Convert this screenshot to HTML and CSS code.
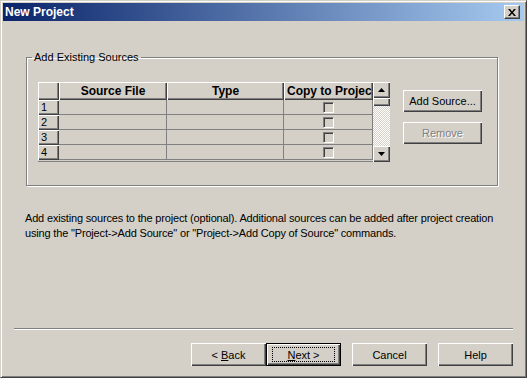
FILE: index.html
```html
<!DOCTYPE html>
<html>
<head>
<meta charset="utf-8">
<title>New Project</title>
<link rel="stylesheet" href="styles.css">
</head>
<body>
<div class="window">
  <div class="titlebar">
    <span class="title">New Project</span>
    <span class="close"><svg width="8" height="7" viewBox="0 0 8 7"><path d="M0 0h2l2 2.5L6 0h2L5 3.5 8 7H6L4 4.5 2 7H0l3-3.5z" fill="#000"/></svg></span>
  </div>
  <div class="client">
    <fieldset class="group">
      <legend>Add Existing Sources</legend>
      <div class="group-row">
        <div class="grid">
          <div class="table">
            <div class="hcell"></div>
            <div class="hcell">Source File</div>
            <div class="hcell">Type</div>
            <div class="hcell clip">Copy to Projec</div>

            <div class="rcell">1</div><div class="dcell"></div><div class="dcell"></div><div class="dcell chk"><span class="box"></span></div>
            <div class="rcell">2</div><div class="dcell"></div><div class="dcell"></div><div class="dcell chk"><span class="box"></span></div>
            <div class="rcell">3</div><div class="dcell"></div><div class="dcell"></div><div class="dcell chk"><span class="box"></span></div>
            <div class="rcell">4</div><div class="dcell"></div><div class="dcell"></div><div class="dcell chk"><span class="box"></span></div>
          </div>
          <div class="vscroll">
            <span class="sbtn"><svg width="7" height="4" viewBox="0 0 7 4"><path d="M3.5 0L7 4H0z" fill="#000"/></svg></span>
            <span class="thumb"></span>
            <span class="track"></span>
            <span class="sbtn"><svg width="7" height="4" viewBox="0 0 7 4"><path d="M0 0h7L3.5 4z" fill="#000"/></svg></span>
          </div>
        </div>
        <div class="side">
          <span class="btn">Add Source...</span>
          <span class="btn disabled">Remove</span>
        </div>
      </div>
    </fieldset>
    <p class="desc">Add existing sources to the project (optional). Additional sources can be added after project creation<br>using the "Project-&gt;Add Source" or "Project-&gt;Add Copy of Source" commands.</p>
    <div class="sep"></div>
    <div class="nav">
      <div class="pair">
        <span class="btn wide"><span class="label">&lt; <u>B</u>ack</span></span>
        <span class="btn wide default"><span class="focus"><span class="label"><u>N</u>ext &gt;</span></span></span>
      </div>
      <span class="btn wide">Cancel</span>
      <span class="btn wide">Help</span>
    </div>
  </div>
</div>
</body>
</html>
```

FILE: styles.css
```css
html, body {
  margin: 0;
  background: #d4d0c8;
}
body {
  font: 11px "Liberation Sans", Arial, sans-serif;
  color: #000;
}
.window {
  width: 527px;
  height: 378px;
  box-sizing: border-box;
  background: #d4d0c8;
  border: 1px solid;
  border-color: #d4d0c8 #404040 #404040 #d4d0c8;
  box-shadow: inset 1px 1px #fff, inset -1px -1px #808080;
  padding: 2px;
  display: flex;
  flex-direction: column;
}
.titlebar {
  flex: none;
  height: 18px;
  display: flex;
  align-items: center;
  justify-content: space-between;
  padding: 0 4px 0 2px;
  background: linear-gradient(90deg, #0a246a, #a6caf0);
}
.title {
  color: #fff;
  font-weight: bold;
  font-size: 12px;
  line-height: 18px;
}
.close {
  width: 16px;
  height: 14px;
  box-sizing: border-box;
  display: flex;
  align-items: center;
  justify-content: center;
  background: #d4d0c8;
  border: 1px solid;
  border-color: #fff #404040 #404040 #fff;
  box-shadow: inset -1px -1px #808080;
}
.client {
  flex: 1;
  display: flex;
  flex-direction: column;
}
.group {
  margin: 30px 0 0 23px;
  padding: 0;
  width: 472px;
  height: 135px;
  box-sizing: border-box;
  border: 1px solid #808080;
  box-shadow: 1px 1px #fff, inset 1px 1px #fff;
  min-inline-size: 0;
}
.group legend {
  margin-left: 5px;
  padding: 0 2px;
  line-height: 13px;
}
.group-row {
  display: flex;
  margin: 18px 0 0 11px;
}
.grid {
  display: flex;
  height: 80px;
}
.table {
  display: grid;
  grid-template-columns: 21px 108px 117px 89px;
  grid-template-rows: 18px repeat(4, 15px);
  height: 80px;
  overflow: hidden;
  border-bottom: 1px solid #808080;
  box-sizing: border-box;
}
.hcell {
  box-shadow: inset 1px 1px #fff, inset -1px -1px #404040, inset -2px -2px #808080;
  font-weight: bold;
  font-size: 12px;
  text-align: center;
  line-height: 18px;
  white-space: nowrap;
  overflow: hidden;
}
.hcell.clip {
  text-align: left;
  padding-left: 3px;
}
.rcell {
  box-shadow: inset 1px 1px #fff, inset -1px -1px #404040, inset -2px -2px #808080;
  padding-left: 3px;
  line-height: 15px;
}
.dcell {
  border-right: 1px solid #808080;
  border-bottom: 1px solid #808080;
}
.chk {
  display: flex;
  justify-content: center;
  padding-top: 2px;
}
.box {
  width: 11px;
  height: 11px;
  box-sizing: border-box;
  border: 1px solid;
  border-color: #808080 #fff #fff #808080;
  box-shadow: inset 1px 1px #404040;
}
.vscroll {
  width: 17px;
  height: 80px;
  display: flex;
  flex-direction: column;
}
.sbtn {
  flex: none;
  height: 16px;
  display: flex;
  align-items: center;
  justify-content: center;
  box-shadow: inset 1px 1px #fff, inset -1px -1px #404040, inset -2px -2px #808080;
}
.thumb {
  flex: none;
  height: 8px;
  box-shadow: inset 1px 1px #fff, inset -1px -1px #404040, inset -2px -2px #808080;
}
.track {
  flex: 1;
  background: conic-gradient(#fff 25%, #d4d0c8 0 50%, #fff 0 75%, #d4d0c8 0) 0 0 / 2px 2px;
}
.side {
  display: flex;
  flex-direction: column;
  gap: 10px;
  margin: 8px 0 0 13px;
}
.btn {
  box-sizing: border-box;
  width: 79px;
  height: 22px;
  display: flex;
  align-items: center;
  justify-content: center;
  background: #d4d0c8;
  box-shadow: inset 1px 1px #fff, inset -1px -1px #404040, inset -2px -2px #808080;
}
.btn.disabled {
  color: #808080;
  text-shadow: 1px 1px #fff;
}
.label {
  white-space: pre;
}
.desc {
  margin: 25px 0 0 22px;
  line-height: 15px;
  letter-spacing: -0.17px;
}
.sep {
  margin: 87px 0 0 11px;
  width: 499px;
  border-top: 1px solid #808080;
  border-bottom: 1px solid #fff;
  height: 0;
}
.nav {
  display: flex;
  gap: 11px;
  margin: 13px 0 0 188px;
}
.pair {
  display: flex;
}
.btn.wide {
  width: 75px;
  height: 23px;
}
.btn.default {
  border: 1px solid #000;
}
.focus {
  width: 61px;
  height: 13px;
  outline: 1px dotted #000;
  display: flex;
  align-items: center;
  justify-content: center;
}
```
